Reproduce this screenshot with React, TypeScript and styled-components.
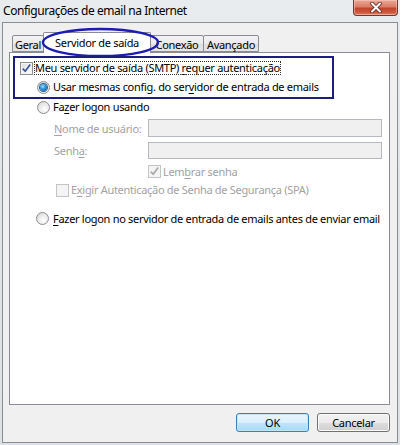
import React from "react";
import styled, { createGlobalStyle } from "styled-components";

const Global = createGlobalStyle`
  html, body { margin: 0; padding: 0; background: #e4e7ea; }
  * { box-sizing: border-box; }
`;

const FONT = `"Noto Sans", "Open Sans", "DejaVu Sans", sans-serif`;

const Frame = styled.div`
  position: relative;
  width: 400px;
  height: 445px;
  padding: 0 2px 2px 2px;
  display: flex;
  flex-direction: column;
  background: linear-gradient(180deg, #e9ecef 0%, #e1e5e9 40%, #dde1e6 100%);
  font-family: ${FONT};
  letter-spacing: -0.3px;
  overflow: hidden;
`;

const TitleBar = styled.div`
  height: 22px;
  display: flex;
  align-items: flex-start;
  justify-content: space-between;
  padding-left: 1px;
`;

const Title = styled.div`
  margin-top: 3px;
  font-size: 12px;
  line-height: 16px;
  color: #000;
  letter-spacing: -0.45px;
`;

const CloseButton = styled.div`
  width: 45px;
  height: 16px;
  border: 1px solid #6b3a32;
  border-top: none;
  border-radius: 0 0 4px 4px;
  background: linear-gradient(180deg, #e9a795 0%, #dc7c66 45%, #c2452c 55%, #cf5a3f 85%, #e08a6e 100%);
  box-shadow: inset 0 0 0 1px rgba(255, 220, 210, 0.45);
  display: flex;
  align-items: center;
  justify-content: center;
`;

const Body = styled.div`
  flex: 1;
  border: 1px solid #8a8d92;
  background: #f0f0f0;
  padding: 9px 7px 10px 6px;
  display: flex;
  flex-direction: column;
`;

const TabStrip = styled.div`
  height: 20px;
  display: flex;
  align-items: flex-end;
  padding-left: 3px;
  position: relative;
  z-index: 1;
`;

const Tab = styled.div<{ $w: number; $active?: boolean }>`
  width: ${(p) => p.$w}px;
  height: ${(p) => (p.$active ? 21 : 17)}px;
  margin-left: -1px;
  margin-bottom: ${(p) => (p.$active ? -1 : 0)}px;
  border: 1px solid #898c95;
  border-bottom: ${(p) => (p.$active ? "none" : "1px solid #898c95")};
  border-radius: 2px 2px 0 0;
  background: ${(p) =>
    p.$active ? "#ffffff" : "linear-gradient(180deg, #f3f3f3 0%, #ebebeb 50%, #dedede 51%, #e5e5e5 100%)"};
  font-size: 11px;
  color: #000;
  display: flex;
  align-items: center;
  justify-content: center;
  padding-top: ${(p) => (p.$active ? 0 : 1)}px;
  padding-bottom: ${(p) => (p.$active ? 2 : 0)}px;
  position: relative;
  z-index: ${(p) => (p.$active ? 2 : 1)};
  &:first-child { margin-left: 0; }
`;

const Panel = styled.div`
  height: 353px;
  border: 1px solid #898c95;
  background: #ffffff;
  padding: 8px 0 0 10px;
  display: flex;
  flex-direction: column;
`;

const Row = styled.div<{ $indent: number; $top: number; $h?: number }>`
  display: flex;
  align-items: center;
  height: ${(p) => p.$h ?? 14}px;
  margin-left: ${(p) => p.$indent}px;
  margin-top: ${(p) => p.$top}px;
  font-size: 11px;
  white-space: nowrap;
`;

const Label = styled.span<{ $disabled?: boolean; $gap?: number; $focus?: boolean }>`
  color: ${(p) => (p.$disabled ? "#a2a2a2" : "#000")};
  margin-left: ${(p) => p.$gap ?? 2}px;
  line-height: 14px;
  padding: 0 1px;
  outline: ${(p) => (p.$focus ? "1px dotted #333" : "none")};
  outline-offset: -1px;
  u { text-decoration: underline; text-underline-offset: 2px; }
`;

const FieldLabel = styled.span`
  width: 94px;
  color: #a2a2a2;
  font-size: 11px;
  u { text-decoration: underline; text-underline-offset: 2px; }
`;

const Input = styled.div<{ $h: number }>`
  width: 234px;
  height: ${(p) => p.$h}px;
  border: 1px solid #b5b9bd;
  background: #f0f0f0;
`;

const Box = styled.span<{ $disabled?: boolean }>`
  width: 13px;
  height: 13px;
  flex: none;
  border: 1px solid ${(p) => (p.$disabled ? "#c4c4c4" : "#8e8f8f")};
  background: ${(p) =>
    p.$disabled ? "#f4f4f4" : "linear-gradient(135deg, #dcdcdc 0%, #f4f4f4 60%, #ffffff 100%)"};
  box-shadow: inset 0 0 0 1px #f4f4f4;
  display: flex;
  align-items: center;
  justify-content: center;
`;

const RadioCircle = styled.span`
  width: 13px;
  height: 13px;
  flex: none;
  border-radius: 50%;
  border: 1px solid #8e8f8f;
  background: radial-gradient(circle at 60% 65%, #ffffff 0%, #e8e8e8 55%, #cfcfcf 100%);
  display: flex;
  align-items: center;
  justify-content: center;
`;

const RadioDot = styled.span`
  width: 7px;
  height: 7px;
  border-radius: 50%;
  background: radial-gradient(circle at 40% 35%, #9fe0ff 0%, #2a8ed8 45%, #0d4f8f 100%);
  box-shadow: 0 0 0 1px #2a5e8c;
`;

const Footer = styled.div`
  margin-top: 8px;
  display: flex;
  justify-content: flex-end;
  gap: 8px;
`;

const Button = styled.div<{ $default?: boolean }>`
  width: 73px;
  height: 19px;
  border-radius: 3px;
  border: 1px solid ${(p) => (p.$default ? "#3c7fb1" : "#707070")};
  background: ${(p) =>
    p.$default
      ? "linear-gradient(180deg, #eaf6fd 0%, #d9f0fc 50%, #bee6fd 51%, #a7d9f5 100%)"
      : "linear-gradient(180deg, #f2f2f2 0%, #ebebeb 50%, #dddddd 51%, #cfcfcf 100%)"};
  box-shadow: inset 0 0 0 1px ${(p) => (p.$default ? "#c4e5f6" : "#fbfbfb")};
  font-size: 11px;
  color: #000;
  display: flex;
  align-items: center;
  justify-content: center;
  line-height: 1;
`;

const Ellipse = styled.svg`
  position: absolute;
  left: 41px;
  top: 27px;
  width: 119px;
  height: 31px;
  z-index: 5;
  pointer-events: none;
`;

const Highlight = styled.div`
  position: absolute;
  left: 13px;
  top: 56px;
  width: 321px;
  height: 43px;
  border: 2px solid #1c1c82;
  z-index: 5;
  pointer-events: none;
`;

const Check = ({ color }: { color: string }) => (
  <svg width="11" height="11" viewBox="0 0 11 11">
    <path d="M1.8 5.6 L4.2 8.3 L9.2 1.6" fill="none" stroke={color} strokeWidth="1.7" strokeLinejoin="round" />
  </svg>
);

const Checkbox = ({ checked, disabled }: { checked?: boolean; disabled?: boolean }) => (
  <Box $disabled={disabled}>{checked && <Check color={disabled ? "#a9a9a9" : "#3b569b"} />}</Box>
);

const Radio = ({ checked }: { checked?: boolean }) => <RadioCircle>{checked && <RadioDot />}</RadioCircle>;

export default function App() {
  return (
    <>
      <Global />
      <Frame>
        <TitleBar>
          <Title>Configurações de email na Internet</Title>
          <CloseButton>
            <svg width="14" height="11" viewBox="0 0 14 11">
              <path d="M3 1.5 L11 9.5 M11 1.5 L3 9.5" stroke="#5a2a20" strokeWidth="3.6" strokeLinecap="round" />
              <path d="M3 1.5 L11 9.5 M11 1.5 L3 9.5" stroke="#ffffff" strokeWidth="2" strokeLinecap="round" />
            </svg>
          </CloseButton>
        </TitleBar>
        <Body>
          <TabStrip>
            <Tab $w={32}>Geral</Tab>
            <Tab $w={108} $active>Servidor de saída</Tab>
            <Tab $w={54}>Conexão</Tab>
            <Tab $w={56}>Avançado</Tab>
          </TabStrip>
          <Panel>
            <Row $indent={0} $top={0}>
              <Checkbox checked />
              <Label $gap={1} $focus>
                Meu servidor de saída (SMTP) <u>r</u>equer autenticação
              </Label>
            </Row>
            <Row $indent={17} $top={5}>
              <Radio checked />
              <Label $gap={2}>
                Usar mesmas config. do ser<u>v</u>idor de entrada de emails
              </Label>
            </Row>
            <Row $indent={17} $top={6}>
              <Radio />
              <Label $gap={2}>
                Fa<u>z</u>er logon usando
              </Label>
            </Row>
            <Row $indent={34} $top={5} $h={18}>
              <FieldLabel>
                <u>N</u>ome de usuário:
              </FieldLabel>
              <Input $h={18} />
            </Row>
            <Row $indent={34} $top={5} $h={17}>
              <FieldLabel>
                Senh<u>a</u>:
              </FieldLabel>
              <Input $h={17} />
            </Row>
            <Row $indent={128} $top={6} $h={13}>
              <Checkbox checked disabled />
              <Label $gap={1} $disabled>
                Lem<u>b</u>rar senha
              </Label>
            </Row>
            <Row $indent={36} $top={5} $h={14}>
              <Checkbox disabled />
              <Label $gap={1} $disabled>
                E<u>x</u>igir Autenticação de Senha de Segurança (SPA)
              </Label>
            </Row>
            <Row $indent={16} $top={15} $h={13}>
              <Radio />
              <Label $gap={3}>
                <u>F</u>azer logon no servidor de entrada de emails antes de enviar email
              </Label>
            </Row>
          </Panel>
          <Footer>
            <Button $default>OK</Button>
            <Button>Cancelar</Button>
          </Footer>
        </Body>
        <Ellipse viewBox="0 0 119 31">
          <ellipse cx="59.5" cy="15.5" rx="57.5" ry="13.5" fill="none" stroke="#1c1cb0" strokeWidth="2.4" />
        </Ellipse>
        <Highlight />
      </Frame>
    </>
  );
}
